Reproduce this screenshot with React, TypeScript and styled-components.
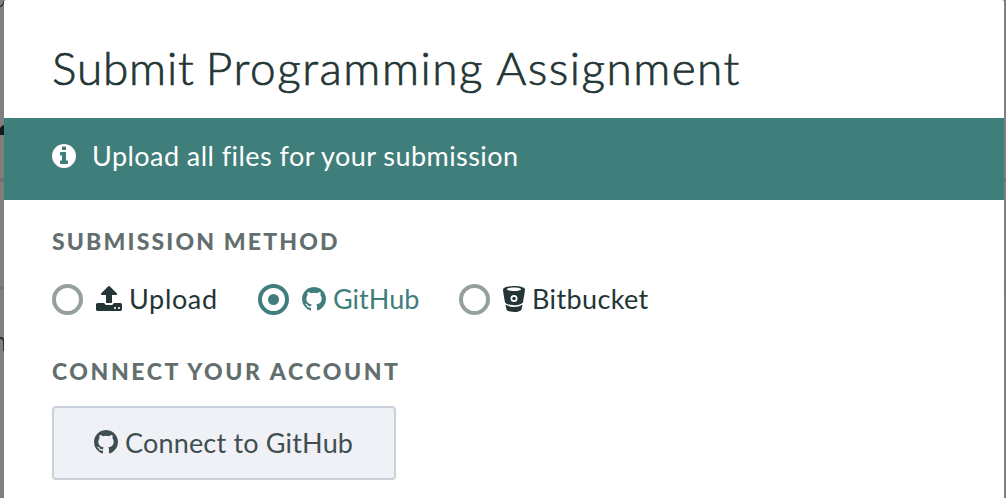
import React from "react";
import styled, { createGlobalStyle } from "styled-components";

const GlobalStyle = createGlobalStyle`
  * { box-sizing: border-box; }
  body {
    margin: 0;
    overflow: hidden;
    font-family: Lato, "Liberation Sans", sans-serif;
    color: #233535;
  }
`;

const Page = styled.div`
  display: grid;
  grid-template-columns: 4px 1000px 2px;
  width: 1006px;
  height: 498px;
  background: #807f7d;
`;

const Backdrop = styled.svg`
  display: block;
  height: 498px;
`;

const Dialog = styled.main`
  background: #fff;
  border-radius: 2px 2px 0 0;
`;

const Header = styled.header`
  height: 118px;
  padding: 40px 48px 0;
`;

const Title = styled.h1`
  margin: 0;
  font-size: 46px;
  font-weight: 300;
  line-height: 56px;
  word-spacing: -2px;
  -webkit-text-stroke: 0.7px currentColor;
  white-space: nowrap;
`;

const TitleWord = styled.span<{ $tracking: number }>`
  letter-spacing: ${(p) => p.$tracking}px;
`;

const Banner = styled.div`
  display: flex;
  align-items: flex-start;
  gap: 16px;
  height: 82px;
  padding: 26px 48px 0;
  background: #3f7e7a;
  color: #fff;
`;

const BannerText = styled.span`
  font-size: 27px;
  line-height: 24px;
  letter-spacing: 0.44px;
  white-space: nowrap;
`;

const Body = styled.div`
  padding: 27px 48px 0;
`;

const SectionLabel = styled.h2<{ $tracking: number }>`
  margin: 0;
  font-size: 23px;
  font-weight: 900;
  line-height: 28px;
  letter-spacing: ${(p) => p.$tracking}px;
  color: #636f6e;
  text-transform: uppercase;
  white-space: nowrap;
`;

const Methods = styled.div`
  display: flex;
  height: 102px;
  padding-top: 28px;
`;

const Method = styled.label<{ $active?: boolean; $width: number }>`
  display: flex;
  align-items: center;
  width: ${(p) => p.$width}px;
  height: 32px;
  color: ${(p) => (p.$active ? "#3f7e7a" : "#233535")};
`;

const Radio = styled.span<{ $active?: boolean }>`
  display: grid;
  place-items: center;
  width: 31px;
  height: 31px;
  margin-right: 13px;
  border: 4.5px solid ${(p) => (p.$active ? "#3f7e7a" : "#95a09d")};
  border-radius: 50%;

  &::after {
    content: "";
    width: 11px;
    height: 11px;
    border-radius: 50%;
    background: ${(p) => (p.$active ? "#3f7e7a" : "transparent")};
  }
`;

const MethodName = styled.span<{ $tracking: number }>`
  margin-left: 7px;
  padding-bottom: 1px;
  font-size: 27px;
  line-height: 31px;
  letter-spacing: ${(p) => p.$tracking}px;
  white-space: nowrap;
`;

const ConnectButton = styled.button`
  display: flex;
  align-items: center;
  width: 344px;
  height: 74px;
  margin-top: 21px;
  padding: 0 0 2px 40px;
  border: 2px solid #cbd1da;
  border-radius: 4px;
  background: #f0f1f6;
  color: #3f4f50;
  font-family: inherit;
`;

const ButtonText = styled.span`
  margin-left: 7px;
  padding-top: 2px;
  font-size: 27px;
  line-height: 32px;
  letter-spacing: 0.18px;
  white-space: nowrap;
`;

const Icon = styled.svg`
  display: block;
  flex: none;
  fill: currentColor;
`;

const InfoIcon = () => (
  <Icon width="24" height="24" viewBox="128 128 1536 1536">
    <path d="M1152 1376v-160q0-14-9-23t-23-9h-96v-512q0-14-9-23t-23-9h-320q-14 0-23 9t-9 23v160q0 14 9 23t23 9h96v320h-96q-14 0-23 9t-9 23v160q0 14 9 23t23 9h448q14 0 23-9t9-23zm-128-896v-160q0-14-9-23t-23-9h-192q-14 0-23 9t-9 23v160q0 14 9 23t23 9h192q14 0 23-9t9-23zm640 416q0 209-103 385.5t-279.5 279.5-385.5 103-385.5-103-279.5-279.5-103-385.5 103-385.5 279.5-279.5 385.5-103 385.5 103 279.5 279.5 103 385.5z" />
  </Icon>
);

const UploadIcon = () => (
  <Icon width="26" height="26" viewBox="64 64 1664 1664">
    <path d="M1344 1472q0-26-19-45t-45-19-45 19-19 45 19 45 45 19 45-19 19-45zm256 0q0-26-19-45t-45-19-45 19-19 45 19 45 45 19 45-19 19-45zm128-224v320q0 40-28 68t-68 28h-1472q-40 0-68-28t-28-68v-320q0-40 28-68t68-28h427q21 56 70.5 92t110.5 36h256q61 0 110.5-36t70.5-92h427q40 0 68 28t28 68zm-325-648q-17 40-59 40h-256v448q0 26-19 45t-45 19h-256q-26 0-45-19t-19-45v-448h-256q-42 0-59-40-17-39 14-69l448-448q18-19 45-19t45 19l448 448q31 30 14 69z" />
  </Icon>
);

const GitHubIcon = () => (
  <Icon width="24" height="24" viewBox="128 128 1536 1536">
    <path d="M896 128q209 0 385.5 103t279.5 279.5 103 385.5q0 251-146.5 451.5t-378.5 277.5q-27 5-40-7t-13-30q0-3 .5-76.5t.5-134.5q0-97-52-142 57-6 102.5-18t94-39 81-66.5 53-105 20.5-150.5q0-119-79-206 37-91-8-204-28-9-81 11t-92 44l-38 24q-93-26-192-26t-192 26q-16-11-42.5-27t-83.5-38.5-85-13.5q-45 113-8 204-79 87-79 206 0 85 20.5 150t52.5 105 80.5 67 94 39 102.5 18q-39 36-49 103-21 10-45 15t-57 5-65.5-21.5-55.5-62.5q-19-32-48.5-52t-49.5-24l-20-3q-21 0-29 4.5t-5 11.5 9 14 13 12l7 5q22 10 43.5 38t31.5 51l10 23q13 38 44 61.5t67 30 69.5 7 55.5-3.5l23-4q0 38 .5 88.5t.5 54.5q0 18-13 30t-40 7q-232-77-378.5-277.5t-146.5-451.5q0-209 103-385.5t279.5-279.5 385.5-103z" />
  </Icon>
);

const BitbucketIcon = () => (
  <Icon width="22" height="26" viewBox="0 0 22 26">
    <path
      fillRule="evenodd"
      d="M11 0C16.8 0 22 1.3 22 3.6C22 5 20.6 13.3 20 16.2C19.7 17.7 15.6 19.2 11 19.2S2.3 17.7 2 16.2C1.4 13.3 0 5 0 3.6C0 1.3 5.2 0 11 0ZM11 1.5C7 1.5 3.9 2.3 3.9 3.3S7 5.1 11 5.1S18.1 4.3 18.1 3.3S15 1.5 11 1.5ZM11 9A3.5 3.5 0 1 0 11 16A3.5 3.5 0 1 0 11 9Z"
    />
    <circle cx="11" cy="12.5" r="1.7" />
    <path d="M3 18.8C5 20.3 8 21 11 21S17 20.3 19 18.8C19.3 18.6 19.5 18.8 19.4 19.2L18.5 23.4C18 24.9 14.8 26 11 26S4 24.9 3.5 23.4L2.6 19.2C2.5 18.8 2.7 18.6 3 18.8Z" />
  </Icon>
);

export default function App() {
  return (
    <>
      <GlobalStyle />
      <Page>
        <Backdrop width="4" viewBox="0 0 4 498">
          <path d="M0 6Q3 5 4 0V3Q3 6 0 7Z" fill="#111b1b" />
          <path d="M0 128Q2 125 4 125V135H0Z" fill="#111b1b" />
          <path d="M0 178H4V182H0ZM0 287H4V289H0Z" fill="#707276" />
          <path d="M0 337H2Q4 337 4 341V351H3V342Q3 339 0 339Z" fill="#29352f" />
        </Backdrop>
        <Dialog>
          <Header>
            <Title>
              <TitleWord $tracking={0.8}>Submit </TitleWord>
              <TitleWord $tracking={1.55}>Programming </TitleWord>
              <TitleWord $tracking={1.45}>Assignment</TitleWord>
            </Title>
          </Header>
          <Banner>
            <InfoIcon />
            <BannerText>Upload all files for your submission</BannerText>
          </Banner>
          <Body>
            <SectionLabel $tracking={2.15}>Submission method</SectionLabel>
            <Methods>
              <Method $width={206}>
                <Radio />
                <UploadIcon />
                <MethodName $tracking={0.65}>Upload</MethodName>
              </Method>
              <Method $active $width={201}>
                <Radio $active />
                <GitHubIcon />
                <MethodName $tracking={0}>GitHub</MethodName>
              </Method>
              <Method $width={200}>
                <Radio />
                <BitbucketIcon />
                <MethodName $tracking={0.38}>Bitbucket</MethodName>
              </Method>
            </Methods>
            <SectionLabel $tracking={2.58}>Connect your account</SectionLabel>
            <ConnectButton>
              <GitHubIcon />
              <ButtonText>Connect to GitHub</ButtonText>
            </ConnectButton>
          </Body>
        </Dialog>
        <Backdrop width="2" viewBox="0 0 2 498">
          <path d="M0 178H2V182H0ZM0 287H2V289H0Z" fill="#747474" />
        </Backdrop>
      </Page>
    </>
  );
}
